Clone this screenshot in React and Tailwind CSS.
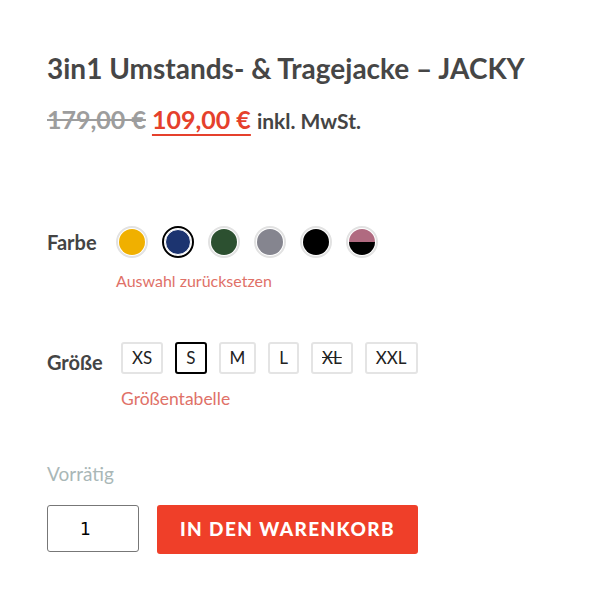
import React, { useState } from "react";

const colors = [
  { name: "Gelb", cls: "bg-[#f0b000]" },
  { name: "Navy", cls: "bg-[#1c3470]" },
  { name: "Grün", cls: "bg-[#2c5030]" },
  { name: "Grau", cls: "bg-[#85858f]" },
  { name: "Schwarz", cls: "bg-black" },
];

const sizes = ["XS", "S", "M", "L", "XL", "XXL"];

export default function App() {
  const [color, setColor] = useState("Navy");
  const [size, setSize] = useState("S");
  const [qty, setQty] = useState(1);

  return (
    <div className="min-h-screen bg-white font-['Lato','Open_Sans',sans-serif] text-[#444]">
      <div className="pl-[47px] pr-6 pt-[50px]">
        {/* Titel */}
        <h1 className="text-[28px] font-bold leading-[36px] text-[#464646]">
          3in1 Umstands- &amp; Tragejacke – JACKY
        </h1>

        {/* Preis */}
        <div className="mt-[18px] flex items-baseline gap-[6px] text-[25px] font-bold leading-[30px]">
          <del className="text-[#9d9d9d] decoration-[#9d9d9d]">179,00 €</del>
          <span className="text-[#e5402c] underline decoration-2 underline-offset-[5px]">109,00 €</span>
          <span className="text-[21px] text-[#444]">inkl. MwSt.</span>
        </div>

        {/* Farbe */}
        <div className="mt-[90px] flex items-start">
          <div className="w-[69px] pt-[4px] text-[20px] font-bold leading-[24px] text-[#444]">Farbe</div>
          <div>
            <div className="flex gap-[14px]">
              {colors.map((c) => (
                <button
                  key={c.name}
                  onClick={() => setColor(c.name)}
                  className={`flex h-[32px] w-[32px] items-center justify-center rounded-full ${color === c.name ? "border-2 border-black" : "border-2 border-[#e2e2e2]"}`}
                >
                  <span className={`block h-[26px] w-[26px] rounded-full ${c.cls} ${color === c.name ? "border border-white" : ""}`}></span>
                </button>
              ))}
              <button
                onClick={() => setColor("Rosa/Schwarz")}
                className={`flex h-[32px] w-[32px] items-center justify-center rounded-full border-2 ${color === "Rosa/Schwarz" ? "border-black" : "border-[#e2e2e2]"}`}
              >
                <span className="flex h-[26px] w-[26px] flex-col overflow-hidden rounded-full">
                  <span className="h-1/2 bg-[#b06a80]"></span>
                  <span className="h-1/2 bg-black"></span>
                </span>
              </button>
            </div>
            <button className="mt-[13px] text-[16px] leading-[20px] text-[#e07168]">Auswahl zurücksetzen</button>
          </div>
        </div>

        {/* Größe */}
        <div className="mt-[49px] flex items-start">
          <div className="w-[74px] pt-[8px] text-[20px] font-bold leading-[24px] text-[#444]">Größe</div>
          <div>
            <div className="flex gap-[12px]">
              {sizes.map((s) => (
                <button
                  key={s}
                  onClick={() => s !== "XL" && setSize(s)}
                  className={`h-[32px] rounded-[3px] px-[9px] text-[17px] leading-[28px] text-[#222] ${size === s ? "border-2 border-black" : "border-2 border-[#e4e4e4]"} ${s === "XL" ? "line-through decoration-[#222]" : ""}`}
                >
                  {s}
                </button>
              ))}
            </div>
            <button className="mt-[15px] text-[17.5px] leading-[20px] text-[#e07168]">Größentabelle</button>
          </div>
        </div>

        {/* Lager */}
        <p className="mt-[52px] text-[19px] leading-[22px] text-[#a9b7b7]">Vorrätig</p>

        {/* Warenkorb */}
        <div className="mt-[20px] flex items-start gap-[18px]">
          <input
            type="number"
            value={qty}
            min={1}
            onChange={(e) => setQty(e.target.value)}
            className="h-[47px] w-[92px] rounded-[3px] border border-[#777] text-center text-[17px] text-black [appearance:textfield] font-['DejaVu_Sans',sans-serif]"
          />
          <button className="h-[49px] w-[261px] rounded-[3px] bg-[#ef3f29] text-[19px] font-black tracking-[1.4px] text-white">
            IN DEN WARENKORB
          </button>
        </div>
      </div>
    </div>
  );
}
